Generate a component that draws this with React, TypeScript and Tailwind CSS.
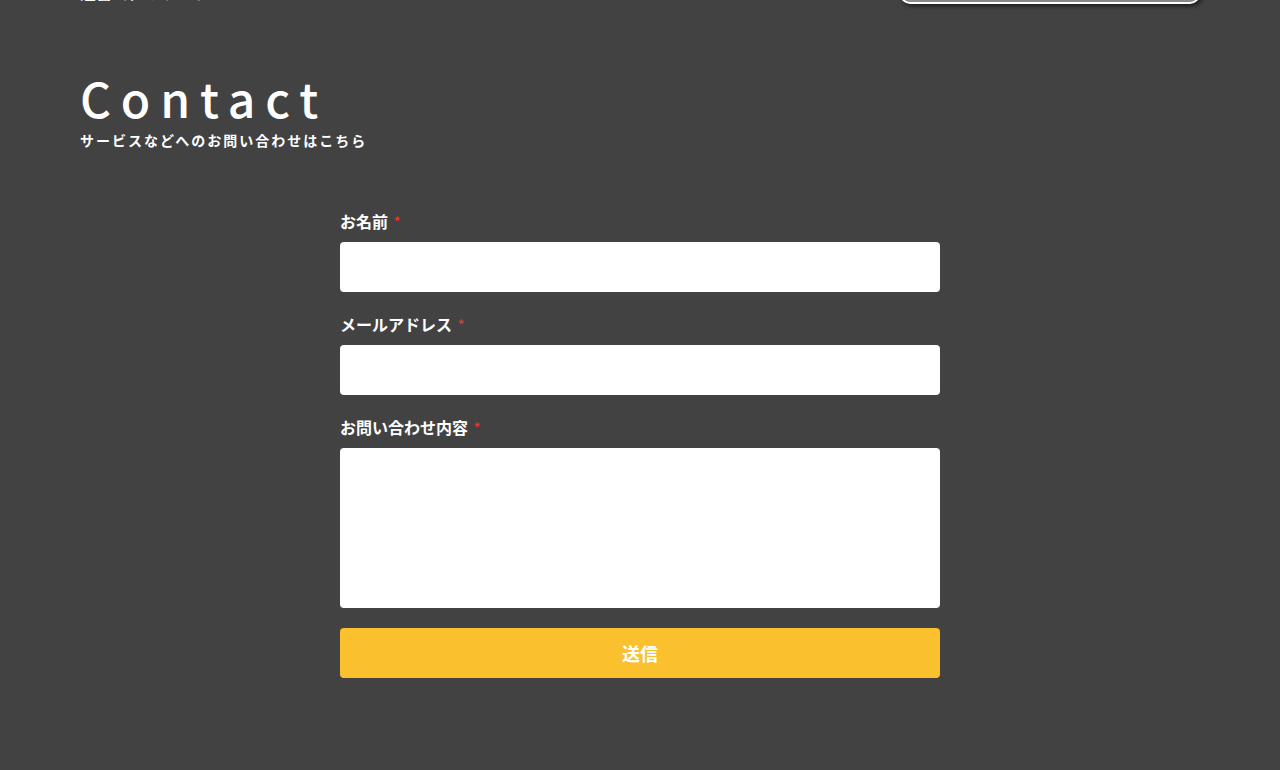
import React from "react";

const font = { fontFamily: '"Noto Sans CJK JP", "Noto Sans", sans-serif' };

function Field({ label, tall }: { label: string; tall?: boolean }) {
  return (
    <div className="flex flex-col">
      <label className="mb-[9px] flex items-center text-[16px] font-bold leading-[24px] text-white">
        {label}
        <span className="ml-[6px] text-[12px] font-bold text-[#e53935]">*</span>
      </label>
      {tall ? (
        <textarea className="h-[160px] w-full resize-none rounded-[4px] border-0 bg-white outline-none" />
      ) : (
        <input className="h-[50px] w-full rounded-[4px] border-0 bg-white outline-none" />
      )}
    </div>
  );
}

export default function App() {
  return (
    <div className="min-h-screen w-full overflow-hidden bg-[#424242]" style={font}>
      <div className="-mt-[42px] flex h-[46px] items-end justify-between px-[80px]">
        <div className="text-[16px] font-bold leading-[24px] text-white">運営会社のサービス</div>
        <div className="h-[44px] w-[300px] rounded-[10px] border-2 border-white bg-[#8a8a8a] shadow-[2px_2px_4px_rgba(0,0,0,0.6)]" />
      </div>

      <div className="px-[80px] pt-[69px]">
        <h1 className="text-[48px] font-medium leading-[48px] tracking-[0.205em] text-white">Contact</h1>
        <p className="mt-[9px] text-[14px] font-bold leading-[20px] tracking-[2px] text-white">
          サービスなどへのお問い合わせはこちら
        </p>
      </div>

      <form className="mx-auto mt-[59px] flex w-[600px] flex-col gap-[20px]">
        <Field label="お名前" />
        <Field label="メールアドレス" />
        <Field label="お問い合わせ内容" tall />
        <button
          type="button"
          className="h-[50px] w-full rounded-[4px] bg-[#fbc02d] text-[18px] font-bold text-white"
        >
          送信
        </button>
      </form>
    </div>
  );
}
